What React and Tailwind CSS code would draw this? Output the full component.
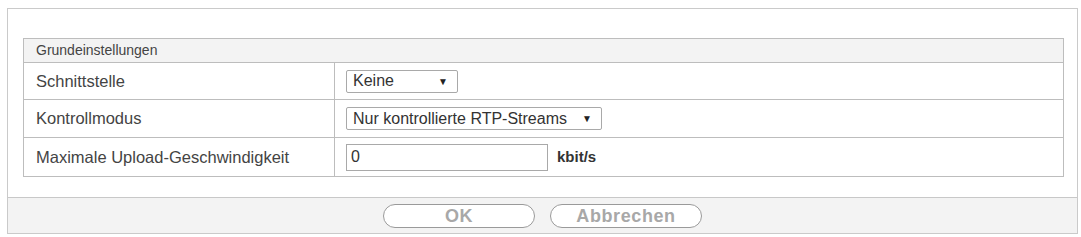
import React from "react";

function Select({ label, width }) {
  return (
    <div
      className="flex items-center justify-between h-[23px] border border-[#a9a9a9] rounded-[2px] bg-white pl-[6px] pr-[9px] text-[16px] text-[#333]"
      style={{ width }}
    >
      <span>{label}</span>
      <span className="text-[10px] text-[#222]">▼</span>
    </div>
  );
}

function Row({ label, children, h }) {
  return (
    <div className={`flex border-t border-[#bdbdbd] ${h}`}>
      <div className="w-[311px] shrink-0 border-r border-[#bdbdbd] flex items-center pl-[12px] text-[16.5px] text-[#444]">
        {label}
      </div>
      <div className="flex-1 flex items-center pl-[11px] gap-[9px]">{children}</div>
    </div>
  );
}

export default function App() {
  return (
    <div
      className="w-[1081px] h-[237px] bg-white pt-[8px] pl-[7px]"
      style={{ fontFamily: '"Liberation Sans", Arial, sans-serif' }}
    >
      <div className="w-[1071px] h-[226px] border border-[#cacaca] flex flex-col">
        <div className="flex-1 pt-[29px] pl-[15px]">
          <div className="w-[1041px] border border-[#bdbdbd]">
            <div className="h-[23px] bg-[#f3f3f3] flex items-center pl-[12px] text-[14px] text-[#444]">
              Grundeinstellungen
            </div>
            <Row label="Schnittstelle" h="h-[37px]">
              <Select label="Keine" width={112} />
            </Row>
            <Row label="Kontrollmodus" h="h-[38px]">
              <Select label="Nur kontrollierte RTP-Streams" width={256} />
            </Row>
            <Row label="Maximale Upload-Geschwindigkeit" h="h-[39px]">
              <div className="w-[202px] h-[27px] border border-[#a9a9a9] bg-white flex items-center pl-[4px] text-[16px] text-[#333]">
                0
              </div>
              <span className="text-[15px] font-bold text-[#333]">kbit/s</span>
            </Row>
          </div>
        </div>
        <div className="h-[36px] border-t border-[#c8c8c8] bg-[#f3f3f3] flex items-center justify-center gap-[15px]">
          <button className="w-[152px] h-[24px] rounded-full border-[1.5px] border-[#9a9a9a] bg-white text-[18px] font-bold tracking-[0.6px] text-[#a8a8a8] leading-none">
            OK
          </button>
          <button className="w-[152px] h-[24px] rounded-full border-[1.5px] border-[#9a9a9a] bg-white text-[18px] font-bold tracking-[0.6px] text-[#a8a8a8] leading-none">
            Abbrechen
          </button>
        </div>
      </div>
    </div>
  );
}
